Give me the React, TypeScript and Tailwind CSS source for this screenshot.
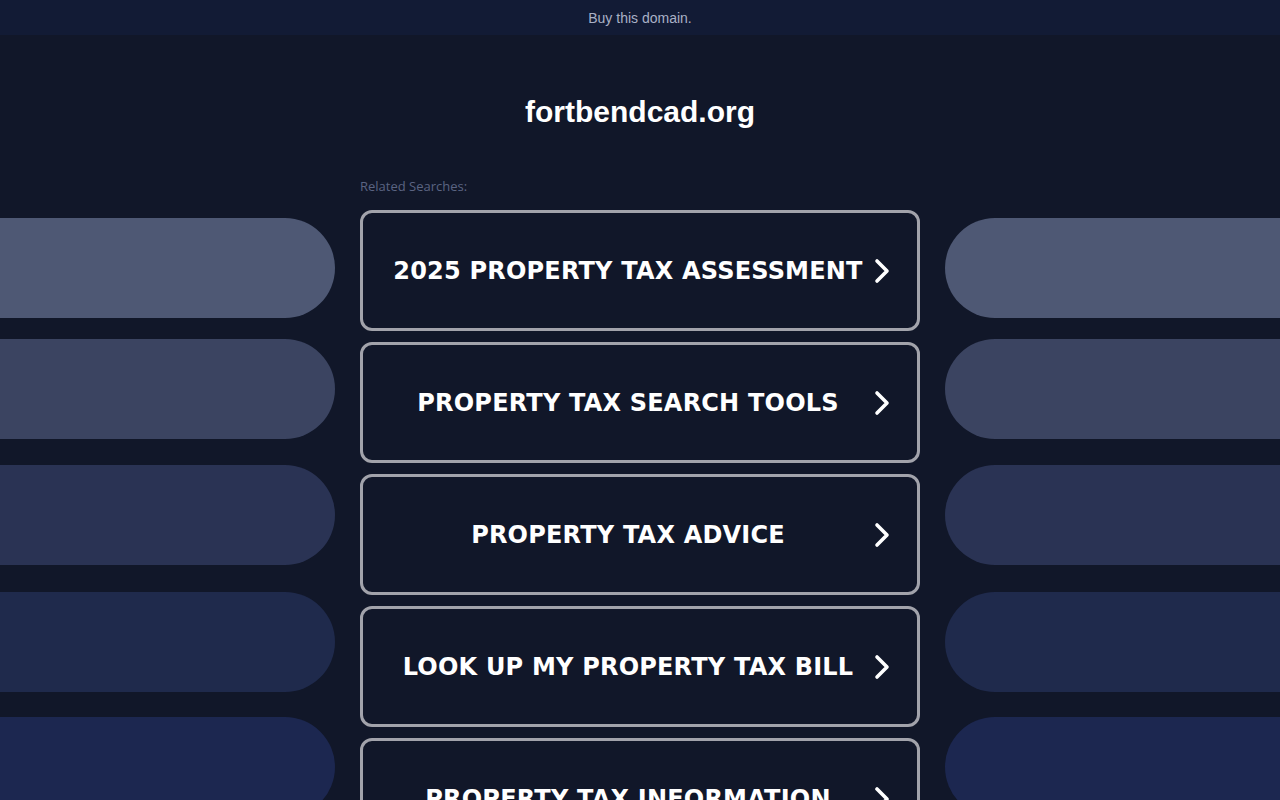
const links = [
  '2025 PROPERTY TAX ASSESSMENT',
  'PROPERTY TAX SEARCH TOOLS',
  'PROPERTY TAX ADVICE',
  'LOOK UP MY PROPERTY TAX BILL',
  'PROPERTY TAX INFORMATION',
];

const pills = [
  { bg: 'bg-[#4e5874]', mt: 'mt-[218px]' },
  { bg: 'bg-[#3b4461]', mt: 'mt-[21px]' },
  { bg: 'bg-[#2a3354]', mt: 'mt-[26px]' },
  { bg: 'bg-[#1f2a4c]', mt: 'mt-[27px]' },
  { bg: 'bg-[#1c2750]', mt: 'mt-[25px]' },
];

function Chevron() {
  return (
    <svg width="18" height="28" viewBox="0 0 18 28" fill="none" className="shrink-0">
      <path d="M4 4 L14 14 L4 24" stroke="white" strokeWidth="3.6" strokeLinecap="round" strokeLinejoin="round" />
    </svg>
  );
}

export default function App() {
  return (
    <div className="w-[1280px] h-[800px] overflow-hidden bg-[#111729] flex flex-col font-['Liberation_Sans',Arial,sans-serif]">
      {/* top bar */}
      <div className="h-[35px] shrink-0 bg-[#121b35] flex items-center justify-center pt-[2px]">
        <span className="text-[14px] text-[#a9b1c6]">Buy this domain.</span>
      </div>

      <div className="flex flex-1 min-h-0">
        {/* left pills */}
        <div className="w-[335px] flex flex-col -mt-[35px]">
          {pills.map((p, i) => (
            <div key={i} className={`h-[100px] shrink-0 rounded-r-[50px] ${p.bg} ${p.mt}`} />
          ))}
        </div>

        {/* center column */}
        <div className="w-[610px] flex flex-col items-center">
          <h1 className="mt-[60px] text-[30px] leading-[34px] font-bold text-white">fortbendcad.org</h1>
          <div className="w-[560px] mt-[49px]">
            <p className="text-[13px] leading-[16px] text-[#5b6482] font-['Open_Sans',sans-serif]">Related Searches:</p>
            <div className="mt-[16px] flex flex-col gap-[11px]">
              {links.map((t) => (
                <div
                  key={t}
                  className="h-[121px] shrink-0 border-[3px] border-[#a2a3ab] rounded-[12px] flex items-center justify-between pl-[20px] pr-[26px]"
                >
                  <span className="flex-1 text-center text-[24px] font-bold text-white tracking-[0.2px] font-['DejaVu_Sans',Verdana,sans-serif]">
                    {t}
                  </span>
                  <Chevron />
                </div>
              ))}
            </div>
          </div>
        </div>

        {/* right pills */}
        <div className="flex-1 flex flex-col -mt-[35px]">
          {pills.map((p, i) => (
            <div key={i} className={`h-[100px] shrink-0 rounded-l-[50px] ${p.bg} ${p.mt}`} />
          ))}
        </div>
      </div>
    </div>
  );
}
